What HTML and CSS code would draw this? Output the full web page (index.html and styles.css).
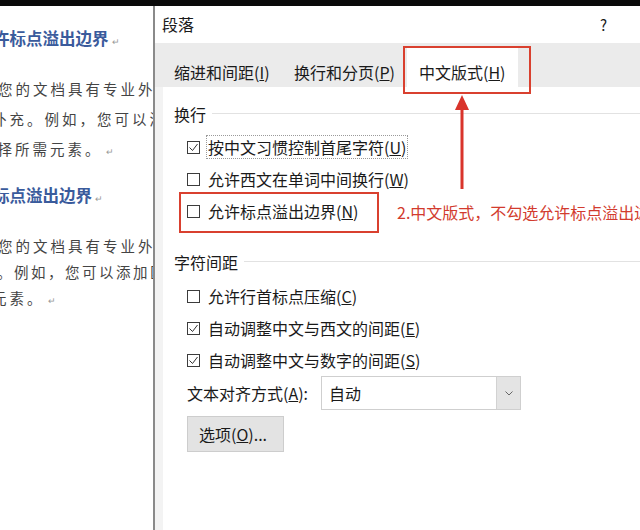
FILE: index.html
```html
<!DOCTYPE html>
<html lang="zh-CN">
<head>
<meta charset="utf-8">
<title>段落</title>
<link rel="stylesheet" href="styles.css">
</head>
<body>
<div class="topbar"></div>
<div class="main">
  <div class="doc">
    <div class="h h1">许标点溢出边界<span class="pm">↵</span></div>
    <div class="para sec1">
      <div class="ln a1">您的文档具有专业外观</div>
      <div class="ln a2">补充。例如，您可以添加</div>
      <div class="ln a3">选择所需元素。<span class="pm">↵</span></div>
    </div>
    <div class="h h2">标点溢出边界<span class="pm">↵</span></div>
    <div class="para sec2">
      <div class="ln b1">您的文档具有专业外观</div>
      <div class="ln b2">。例如，您可以添加匹配</div>
      <div class="ln b3">元素。<span class="pm">↵</span></div>
    </div>
  </div>
  <div class="divider"></div>
  <div class="dialog">
    <div class="titlebar">
      <span class="title">段落</span>
      <span class="help">?</span>
    </div>
    <div class="tabs">
      <div class="tab t1">缩进和间距(<u>I</u>)</div>
      <div class="tab t2">换行和分页(<u>P</u>)</div>
      <div class="tab t3 active">中文版式(<u>H</u>)</div>
    </div>
    <div class="panel">
      <div class="group">换行</div>
      <div class="rows">
        <div class="row"><span class="box checked"><svg viewBox="0 0 13 13" width="13" height="13"><polyline points="2.5,6.5 5.5,9.5 10.5,3" fill="none" stroke="#333" stroke-width="1"/></svg></span><span class="label focus">按中文习惯控制首尾字符(<u>U</u>)</span></div>
        <div class="row"><span class="box"></span><span class="label">允许西文在单词中间换行(<u>W</u>)</span></div>
        <div class="row"><span class="box"></span><span class="label">允许标点溢出边界(<u>N</u>)</span></div>
      </div>
      <div class="group g2">字符间距</div>
      <div class="rows r2">
        <div class="row"><span class="box"></span><span class="label">允许行首标点压缩(<u>C</u>)</span></div>
        <div class="row"><span class="box checked"><svg viewBox="0 0 13 13" width="13" height="13"><polyline points="2.5,6.5 5.5,9.5 10.5,3" fill="none" stroke="#333" stroke-width="1"/></svg></span><span class="label">自动调整中文与西文的间距(<u>E</u>)</span></div>
        <div class="row"><span class="box checked"><svg viewBox="0 0 13 13" width="13" height="13"><polyline points="2.5,6.5 5.5,9.5 10.5,3" fill="none" stroke="#333" stroke-width="1"/></svg></span><span class="label">自动调整中文与数字的间距(<u>S</u>)</span></div>
      </div>
      <div class="align">
        <span class="alabel">文本对齐方式(<u>A</u>):</span>
        <div class="select">
          <span class="sval">自动</span>
          <span class="sbtn"><svg viewBox="0 0 8 5" width="8" height="5"><polyline points="0.5,0.5 4,4 7.5,0.5" fill="none" stroke="#666" stroke-width="1"/></svg></span>
        </div>
      </div>
      <div class="btnrow"><span class="btn">选项(<u>O</u>)...</span></div>
    </div>

    <div class="mark mark-tab"></div>
    <div class="mark mark-row"></div>
    <svg class="arrow" viewBox="0 0 14 94" width="14" height="94"><polygon points="7,0 14,15 0,15" fill="#d9342b"/><rect x="5.5" y="13" width="3" height="81" fill="#d9342b"/></svg>
    <div class="note">2.中文版式，不勾选允许标点溢出边界</div>
  </div>
</div>
</body>
</html>
```

FILE: styles.css
```css
html, body {
  margin: 0;
  padding: 0;
}
body {
  width: 640px;
  height: 530px;
  overflow: hidden;
  background: #ffffff;
  font-family: "Noto Sans CJK SC", "Noto Sans", sans-serif;
  color: #1f1f1f;
}
.topbar {
  height: 6px;
  background: #0a0a0a;
}
.main {
  display: flex;
  height: 524px;
}
.doc {
  width: 153px;
  flex: none;
  overflow: hidden;
  background: #ffffff;
  padding-top: 20px;
  box-sizing: border-box;
  white-space: nowrap;
}
.h {
  font-size: 16.5px;
  font-weight: bold;
  color: #3a5b9c;
  line-height: 24px;
  margin-left: -7px;
}
.h .pm {
  font-weight: normal;
}
.pm {
  font-size: 9px;
  color: #999;
  margin-left: 3px;
  letter-spacing: 0;
}
.para {
  font-size: 14.5px;
  color: #444444;
  letter-spacing: 3px;
}
.sec1 {
  margin-top: 20px;
  line-height: 30px;
}
.h2 {
  margin-top: 16px;
}
.sec2 {
  margin-top: 22px;
  line-height: 26px;
}
.a1 { margin-left: -2px; }
.a2 { margin-left: -8px; }
.a3 { margin-left: -20px; }
.b1 { margin-left: -2px; }
.b2 { margin-left: -3px; letter-spacing: 2.5px; }
.b3 { margin-left: -8px; }

.divider {
  width: 2px;
  flex: none;
  background: #8a8a8a;
}
.dialog {
  flex: 1;
  position: relative;
  background: #f3f3f3;
  display: flex;
  flex-direction: column;
  overflow: hidden;
  font-size: 16px;
}
.titlebar {
  height: 37px;
  background: #ffffff;
  display: flex;
  align-items: center;
  justify-content: space-between;
  padding: 0 33px 0 7px;
  line-height: 37px;
}
.title {
  font-size: 16px;
  color: #1a1a1a;
}
.help {
  font-size: 15px;
  color: #1a1a1a;
}
.tabs {
  height: 44px;
  background: #ebebeb;
  display: flex;
  align-items: flex-end;
  padding-left: 8px;
}
.tab {
  height: 40px;
  box-sizing: border-box;
  padding: 15px 0 0 11px;
  line-height: 20px;
  color: #1a1a1a;
  white-space: nowrap;
  flex: none;
}
.t1 { width: 120px; }
.t2 { width: 124px; }
.t3 { width: 111px; padding-left: 12px; }
.tab.active {
  background: #ffffff;
}
.panel {
  flex: 1;
  margin-left: 8px;
  background: #ffffff;
  padding: 14px 0 0 11px;
}
.group {
  height: 26px;
  line-height: 26px;
  display: flex;
  align-items: center;
  color: #1a1a1a;
}
.group::after {
  content: "";
  flex: 1;
  height: 1px;
  background: #e2e2e2;
  margin-left: 6px;
  margin-top: -2px;
}
.g2 {
  margin-top: 22px;
}
.rows {
  margin-top: 4px;
  margin-left: 13px;
}
.r2 {
  margin-top: 5px;
}
.row {
  height: 32px;
  display: flex;
  align-items: center;
}
.box {
  width: 13px;
  height: 13px;
  box-sizing: border-box;
  border: 1px solid #3c3c3c;
  flex: none;
  position: relative;
}
.box svg {
  position: absolute;
  left: -1px;
  top: -1px;
}
.label {
  margin-left: 6px;
  line-height: 22px;
  color: #1a1a1a;
  padding: 0 1px;
  border: 1px solid transparent;
}
.label.focus {
  border: 1px dotted #9a9a9a;
}
.align {
  margin-left: 13px;
  height: 34px;
  display: flex;
  align-items: center;
}
.alabel {
  width: 134px;
  flex: none;
  color: #1a1a1a;
}
.select {
  width: 200px;
  height: 34px;
  box-sizing: border-box;
  border: 1px solid #cfcfcf;
  display: flex;
  align-items: center;
  background: #ffffff;
}
.sval {
  flex: 1;
  padding-left: 7px;
  color: #1a1a1a;
}
.sbtn {
  width: 23px;
  height: 32px;
  background: #e4e4e4;
  border-left: 1px solid #d2d2d2;
  display: flex;
  align-items: center;
  justify-content: center;
}
.btnrow {
  margin-top: 6px;
  margin-left: 13px;
  display: flex;
}
.btn {
  width: 97px;
  height: 36px;
  box-sizing: border-box;
  background: #e3e3e3;
  border: 1px solid #cdcdcd;
  display: flex;
  align-items: center;
  padding-left: 11px;
  color: #1a1a1a;
}
.mark {
  position: absolute;
  border: 2px solid #d9402f;
  box-sizing: border-box;
}
.mark-tab {
  left: 248px;
  top: 40px;
  width: 128px;
  height: 48px;
}
.mark-row {
  left: 24px;
  top: 186px;
  width: 200px;
  height: 41px;
}
.arrow {
  position: absolute;
  left: 300px;
  top: 89px;
}
.note {
  position: absolute;
  left: 242px;
  top: 194px;
  line-height: 24px;
  font-size: 16px;
  color: #d23b2e;
  white-space: nowrap;
}
```
